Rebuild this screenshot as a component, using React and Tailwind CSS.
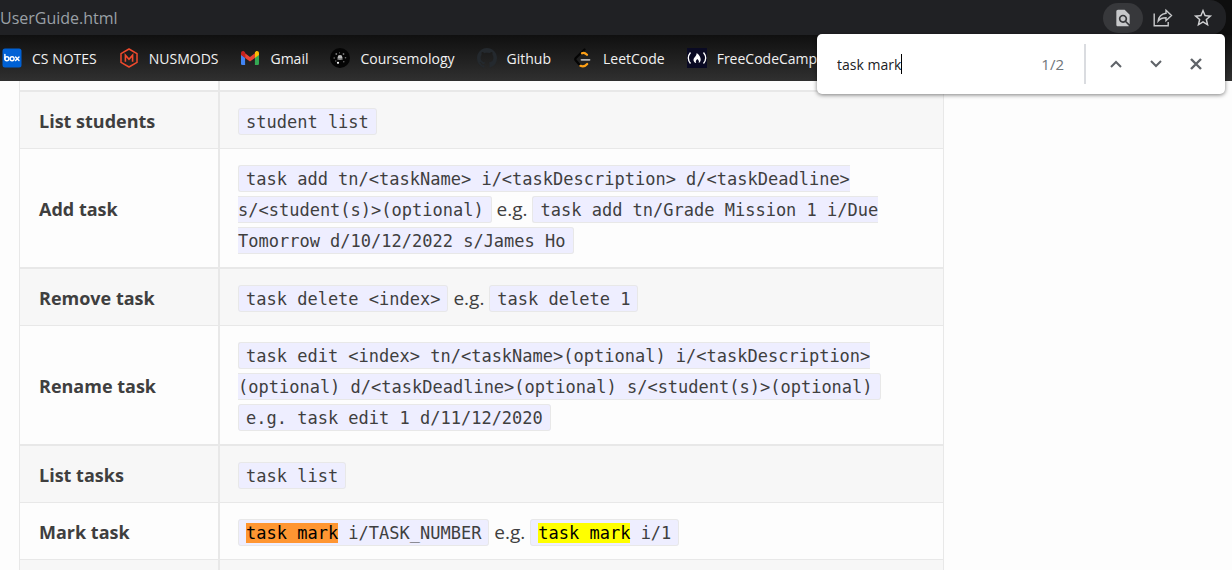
import React from "react";

const bookmarks = [
  { label: "CS NOTES", icon: "box" },
  { label: "NUSMODS", icon: "mods" },
  { label: "Gmail", icon: "gmail" },
  { label: "Coursemology", icon: "course" },
  { label: "Github", icon: "github" },
  { label: "LeetCode", icon: "leet" },
  { label: "FreeCodeCamp", icon: "fcc" },
];

function BookmarkIcon({ name }) {
  if (name === "box")
    return (
      <svg width="20" height="20" viewBox="0 0 20 20" aria-hidden="true">
        <rect x="0.5" y="0.5" width="19" height="19" rx="2.5" fill="#0061d5" />
        <g fill="none" stroke="#fff" strokeWidth="1.4" strokeLinecap="round">
          <path d="M2.9 6.5v4.500" />
          <circle cx="4.900" cy="10.800" r="2" />
          <circle cx="10.1" cy="10.800" r="2" />
          <path d="M13.6 9l3.4 3.6M17 9l-3.400 3.600" />
        </g>
      </svg>
    );
  if (name === "mods")
    return (
      <svg width="20" height="20" viewBox="0 0 20 20" fill="none" stroke="#f04a2c" aria-hidden="true">
        <path d="M10 1l8 4.600v8.800L10 19l-8-4.600V5.600z" strokeWidth="1.5" strokeLinejoin="round" />
        <path d="M6.400 13.700V7.200L10 11.200l3.600-4v6.500" strokeWidth="1.600" />
      </svg>
    );
  if (name === "gmail")
    return (
      <svg width="20" height="20" viewBox="0 0 20 20" aria-hidden="true">
        <path fill="#4285f4" d="M1 6.500l4.100 3V17H2.300A1.300 1.300 0 0 1 1 15.700z" />
        <path fill="#34a853" d="M19 6.500l-4.100 3V17h2.800a1.300 1.300 0 0 0 1.300-1.300z" />
        <path fill="#ea4335" d="M5.100 5.200L10 8.900l4.900-3.700v4.700L10 13.600 5.100 9.900z" />
        <path fill="#c5221f" d="M1 5.200c0-2 2-2.600 3.200-1.700l.9.700v5.700L1 6.900z" />
        <path fill="#fbbc04" d="M19 5.200c0-2-2-2.600-3.200-1.700l-.9.700v5.700L19 6.900z" />
      </svg>
    );
  if (name === "course")
    return (
      <svg width="20" height="20" viewBox="0 0 20 20" aria-hidden="true">
        <circle cx="10" cy="10" r="10" fill="#050505" />
        <g fill="#777">
          <circle cx="6.300" cy="6" r="0.900" />
          <circle cx="9.500" cy="4.800" r="0.600" />
          <circle cx="13.500" cy="6" r="0.900" />
          <circle cx="4.200" cy="10" r="0.800" />
          <circle cx="15.500" cy="9.800" r="0.800" />
          <circle cx="13.800" cy="13.800" r="0.700" />
          <circle cx="5.800" cy="13" r="0.700" />
        </g>
        <circle cx="10" cy="9.500" r="2.400" fill="#bbb" />
        <path d="M7.300 10.300h5.400v1.400H7.300z" fill="#777" />
        <circle cx="8" cy="14.800" r="1.100" fill="#fff" />
      </svg>
    );
  if (name === "github")
    return (
      <svg width="20" height="20" viewBox="0 0 16 16" fill="#24292e" aria-hidden="true">
        <path d="M8 0C3.58 0 0 3.580 0 8c0 3.540 2.290 6.530 5.470 7.590.4.070.55-.17.55-.38 0-.19-.01-.82-.01-1.490-2.010.37-2.530-.49-2.690-.94-.09-.23-.48-.94-.82-1.130-.28-.15-.68-.52-.01-.53.63-.01 1.080.58 1.230.82.72 1.210 1.870.87 2.330.66.07-.52.28-.87.51-1.070-1.780-.2-3.640-.89-3.640-3.950 0-.87.31-1.590.82-2.150-.08-.2-.36-1.020.08-2.120 0 0 .67-.21 2.200.82.64-.18 1.320-.27 2-.27s1.360.09 2 .27c1.530-1.040 2.200-.82 2.200-.82.44 1.100.16 1.920.08 2.120.51.56.82 1.270.82 2.150 0 3.070-1.870 3.750-3.650 3.950.29.25.54.73.54 1.480 0 1.070-.01 1.930-.01 2.200 0 .21.15.46.55.38A8.010 8.010 0 0 0 16 8c0-4.420-3.580-8-8-8z" />
      </svg>
    );
  if (name === "leet")
    return (
      <svg width="20" height="20" viewBox="0 0 20 20" fill="none" strokeWidth="2.200" strokeLinecap="round" aria-hidden="true">
        <path d="M11.500 1.500L2.800 10a2 2 0 0 0 0 2.600L6.300 16.500" stroke="#050505" />
        <path d="M9 5.300c1.600-.9 3.200-.3 5 1.500M7.500 17.800c2.500 1.300 4.700.5 6.700-1.800" stroke="#ffa116" />
        <path d="M8.500 11.800h8" stroke="#b3b3b3" strokeWidth="1.800" />
      </svg>
    );
  return (
    <svg width="20" height="20" viewBox="0 0 20 20" aria-hidden="true">
      <path d="M0 0h20v20H0z" fill="#0a0a23" />
      <path d="M3.500 4.500c-2.800 3.500-2.800 7.500 0 11M16.500 4.500c2.800 3.500 2.800 7.500 0 11" fill="none" stroke="#fff" strokeWidth="1.300" />
      <path d="M9.700 5c2.800 2 4 4.500 4 6.800 0 1.600-.9 2.700-2 3.200.7-1.700-.1-2.700-1.200-4-1.400.9-2.300 2.500-1.300 4-1.600-.3-2.700-1.600-2.700-3.100 0-2.300 3.200-3.700 3.200-6.900z" fill="#fff" />
    </svg>
  );
}

function Code({ children }) {
  return (
    <code className="rounded-[3px] border border-[#e8e8e8] bg-[#eeeeff] px-[7px] pt-[3px] pb-[2px] font-['DejaVu_Sans_Mono',monospace] text-[17px] leading-5">
      {children}
    </code>
  );
}

function Row({ name, shaded, thick, children }) {
  return (
    <tr className={`${shaded ? "bg-[#f7f7f7]" : ""} ${thick ? "border-b-2" : "border-b"}`}>
      <th scope="row" className="border-r-2 px-[19px] pt-[14px] pb-[11px] text-left text-[18px] font-bold">
        {name}
      </th>
      <td className="px-[18px] pt-[14px] pb-[11px]">{children}</td>
    </tr>
  );
}

export default function App() {
  return (
    <div className="flex h-screen flex-col overflow-hidden bg-[#fdfdfd] font-['Open_Sans',sans-serif]">
      <header className="relative shrink-0 text-white">
        <div className="bg-[#0e0e0e] pr-[6px]">
          <div className="flex h-[35px] items-center justify-between rounded-r-[16px] bg-[#202124] pr-[3px]">
            <span className="text-[16px] text-[#9aa0a6]">UserGuide.html</span>
            <div className="flex items-center">
              <button aria-label="Find in page" className="flex h-[30px] w-10 items-center justify-center rounded-full bg-[#37383b]">
                <svg width="20" height="20" viewBox="0 0 24 24" fill="#c7c8ca">
                  <path d="M20 19.590V8l-6-6H6c-1.100 0-1.990.9-1.990 2L4 20c0 1.100.89 2 1.990 2H18c.45 0 .85-.15 1.190-.4l-4.430-4.430c-.8.520-1.740.830-2.760.830-2.760 0-5-2.240-5-5s2.240-5 5-5 5 2.240 5 5c0 1.020-.31 1.960-.83 2.750L20 19.590zM9 13c0 1.660 1.340 3 3 3s3-1.340 3-3-1.340-3-3-3-3 1.340-3 3z" />
                </svg>
              </button>
              <button aria-label="Share" className="flex h-[30px] w-10 items-center justify-center">
                <svg width="20" height="20" viewBox="0 0 20 20" fill="none" stroke="#c7c8ca" strokeWidth="1.400">
                  <path d="M1.200 5.500v12.300h14V14" />
                  <path d="M13 2.300l5.500 5.200L13 12.700V9.800c-3.500 0-6 1-7.800 3.200.5-4 3.300-7 7.800-7.700z" />
                </svg>
              </button>
              <button aria-label="Bookmark this page" className="flex h-[30px] w-10 items-center justify-center">
                <svg width="22" height="22" viewBox="0 0 24 24" fill="#d0d1d3">
                  <path d="M22 9.240l-7.190-.62L12 2 9.190 8.630 2 9.240l5.460 4.730L5.820 21 12 17.270 18.180 21l-1.630-7.030L22 9.240zM12 15.400l-3.760 2.270 1-4.280-3.320-2.880 4.380-.38L12 6.100l1.710 4.040 4.380.38-3.320 2.880 1 4.280L12 15.400z" />
                </svg>
              </button>
            </div>
          </div>
        </div>
        <nav aria-label="Bookmarks" className="flex h-[46px] items-center gap-[22px] bg-linear-to-b from-[#101010] to-[#303030] pl-[2px]">
          {bookmarks.map((b) => (
            <a key={b.label} href="#" className="flex items-center gap-[10px] text-[14px] whitespace-nowrap text-[#f1f1f1]">
              <BookmarkIcon name={b.icon} />
              {b.label}
            </a>
          ))}
        </nav>
        <form className="absolute top-[34px] right-[7px] flex h-[60px] w-[408px] items-center rounded-[5px] bg-white pr-[9px] pl-5 shadow-[0_1px_4px_rgba(0,0,0,0.5)]">
          <div className="flex min-w-0 flex-1 items-center">
            <input
              aria-label="Find"
              defaultValue="task mark"
              className="field-sizing-content text-[14px] text-[#202124] caret-transparent outline-none"
            />
            <span className="h-5 w-px bg-black" />
          </div>
          <span className="text-[15px] text-[#70757a]">1/2</span>
          <span className="mr-[10px] ml-5 h-10 border-l-2 border-[#dadce0]" />
          <button type="button" aria-label="Previous" className="flex size-10 items-center justify-center">
            <svg width="12" height="12" viewBox="0 0 12 12" fill="none" stroke="#5f6368" strokeWidth="2"><path d="M1 9l5-5 5 5" /></svg>
          </button>
          <button type="button" aria-label="Next" className="flex size-10 items-center justify-center">
            <svg width="12" height="12" viewBox="0 0 12 12" fill="none" stroke="#5f6368" strokeWidth="2"><path d="M1 3l5 5 5-5" /></svg>
          </button>
          <button type="button" aria-label="Close" className="flex size-10 items-center justify-center">
            <svg width="12" height="12" viewBox="0 0 12 12" fill="none" stroke="#5f6368" strokeWidth="2.400"><path d="M1 1l10 10M11 1L1 11" /></svg>
          </button>
        </form>
      </header>
      <main className="pl-[19px]">
        <table className="w-full max-w-[925px] border-separate border-spacing-0 border-x border-[#e8e8e8] text-[19px] leading-[31px] text-[#3f3f3f] [&_tr>*]:border-[#e8e8e8] [&_tr.border-b>*]:border-b [&_tr.border-b-2>*]:border-b-2">
          <colgroup>
            <col className="w-[200px]" />
            <col />
          </colgroup>
          <tbody>
            <tr className="h-[11px] border-b-2">
              <td className="border-r-2" />
              <td />
            </tr>
            <Row name="List students" shaded>
              <Code>student list</Code>
            </Row>
            <Row name="Add task" thick>
              <Code>{"task add tn/<taskName> i/<taskDescription> d/<taskDeadline> s/<student(s)>(optional)"}</Code> e.g.{" "}
              <Code>task add tn/Grade Mission 1 i/Due Tomorrow d/10/12/2022 s/James Ho</Code>
            </Row>
            <Row name="Remove task" shaded>
              <Code>{"task delete <index>"}</Code> e.g. <Code>task delete 1</Code>
            </Row>
            <Row name="Rename task" thick>
              <Code>{"task edit <index> tn/<taskName>(optional) i/<taskDescription>(optional) d/<taskDeadline>(optional) s/<student(s)>(optional)"}</Code>{" "}
              <Code>e.g. task edit 1 d/11/12/2020</Code>
            </Row>
            <Row name="List tasks" shaded>
              <Code>task list</Code>
            </Row>
            <Row name="Mark task">
              <Code>
                <mark className="bg-[#ff9632] text-black">task mark</mark> i/TASK_NUMBER
              </Code>{" "}
              e.g.{" "}
              <Code>
                <mark className="bg-[#ffff00] text-black">task mark</mark> i/1
              </Code>
            </Row>
            <tr className="h-[57px] border-b bg-[#f7f7f7]">
              <td className="border-r-2" />
              <td />
            </tr>
          </tbody>
        </table>
      </main>
    </div>
  );
}
